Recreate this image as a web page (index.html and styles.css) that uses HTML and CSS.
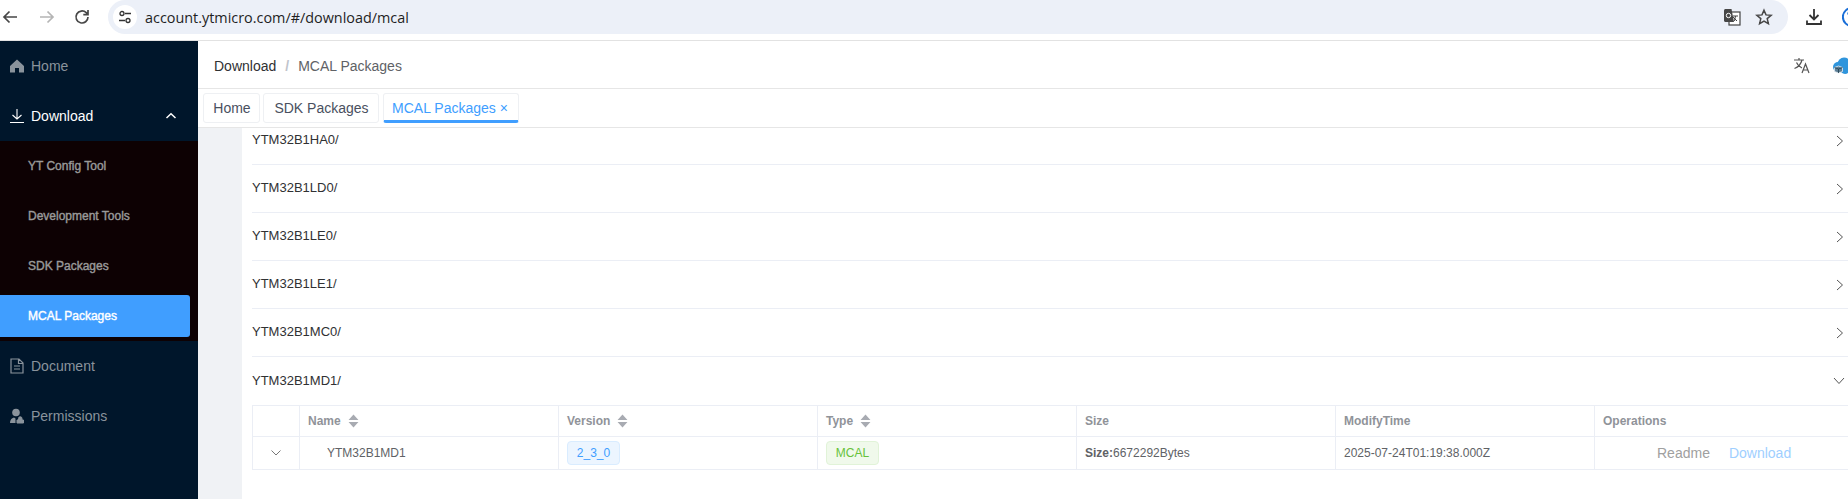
FILE: index.html
```html
<!DOCTYPE html>
<html lang="en">
<head>
<meta charset="utf-8">
<title>MCAL Packages</title>
<link rel="stylesheet" href="styles.css">
</head>
<body>
<div class="chrome">
  <svg class="cicon" width="20" height="20" viewBox="0 0 20 20"><path d="M17 10H4M9.500 4.500 4 10l5.500 5.500" fill="none" stroke="#474747" stroke-width="1.700"/></svg>
  <svg class="cicon fwd" width="20" height="20" viewBox="0 0 20 20"><path d="M3 10h13M10.500 4.500 16 10l-5.500 5.500" fill="none" stroke="#b5b5b5" stroke-width="1.700"/></svg>
  <svg class="cicon reload" width="20" height="20" viewBox="0 0 20 20"><path d="M16 10a6 6 0 1 1-1.800-4.300L16 7.500M16 3v4.700h-4.700" fill="none" stroke="#474747" stroke-width="1.700"/></svg>
  <div class="omnibox">
    <span class="tune"><svg width="16" height="16" viewBox="0 0 16 16"><circle cx="5" cy="4.500" r="2" fill="none" stroke="#333" stroke-width="1.300"/><path d="M8 4.500h6M2 11.500h6" stroke="#333" stroke-width="1.300"/><circle cx="11" cy="11.500" r="2" fill="none" stroke="#333" stroke-width="1.300"/></svg></span>
    <span class="url">account.ytmicro.com/#/download/mcal</span>
    <span class="spacer"></span>
    <svg class="gt" width="18" height="18" viewBox="0 0 18 18"><rect x="6" y="4" width="11" height="13" fill="#fff" stroke="#444" stroke-width="1.200"/><path d="M10 8h5M12.500 8l-1 5M10 9l4 4" stroke="#444" stroke-width="1" fill="none"/><path d="M1 2.500C1 1.700 1.700 1 2.500 1h6L11 14H2.500C1.700 14 1 13.300 1 12.500z" fill="#474747"/><circle cx="5.500" cy="7.500" r="2.200" fill="none" stroke="#fff" stroke-width="1"/></svg>
    <svg class="star" width="18" height="18" viewBox="0 0 18 18"><path d="M9 2.200l2 4.700 5.100.4-3.900 3.300 1.200 5L9 13l-4.400 2.600 1.200-5L1.900 7.300 7 6.900z" fill="none" stroke="#474747" stroke-width="1.500"/></svg>
  </div>
  <svg class="dl" width="20" height="20" viewBox="0 0 20 20"><path d="M10 2v10M5.500 8 10 12.500 14.500 8M3 13.500V17h14v-3.500" fill="none" stroke="#333" stroke-width="1.800"/></svg>
  <svg class="avatar" width="20" height="20" viewBox="0 0 20 20"><path d="M17 4.500A9 9 0 1 0 17 15.500" fill="none" stroke="#1a6fd8" stroke-width="2"/><path d="M6 7.500a3 3 0 0 1 6 0v2" fill="none" stroke="#1a6fd8" stroke-width="1.600"/></svg>
</div>
<div class="app">
  <aside class="side">
    <div class="mi"><svg class="mic" width="16" height="16" viewBox="0 0 16 16"><path d="M8 1.500 1 8v6.500h5V10h4v4.500h5V8z" fill="#8a939c"/></svg>Home</div>
    <div class="mi open"><svg class="mic" width="16" height="16" viewBox="0 0 16 16"><path d="M8 1v9.500M3.500 7 8 11l4.500-4M1 14.500h14" fill="none" stroke="#fff" stroke-width="1.100"/></svg>Download<svg class="caret" width="12" height="8" viewBox="0 0 12 8"><path d="M1.500 6 6 1.800 10.500 6" fill="none" stroke="#fff" stroke-width="1.500"/></svg></div>
    <div class="sub">
      <div class="si">YT Config Tool</div>
      <div class="si">Development Tools</div>
      <div class="si">SDK Packages</div>
      <div class="si on"><span class="pill">MCAL Packages</span></div>
    </div>
    <div class="mi"><svg class="mic" width="16" height="16" viewBox="0 0 16 16"><path d="M2 1h8l4 4v10H2zM9.500 1v4.500H14M5 8h6M5 11h6" fill="none" stroke="#8a939c" stroke-width="1.200"/></svg>Document</div>
    <div class="mi"><svg class="mic" width="16" height="16" viewBox="0 0 16 16"><circle cx="7" cy="4.500" r="3.800" fill="#8a939c"/><path d="M1 15c0-3 1.500-5 4-5.500l1.500 1V15z" fill="#8a939c"/><path d="M8 15v-3h6.500v3zM9.500 12v-1.500a1.700 1.700 0 0 1 3.500 0V12" fill="#8a939c" stroke="#8a939c"/></svg>Permissions</div>
  </aside>
  <main class="main">
    <header class="head">
      <span class="crumb">Download</span><span class="sep">/</span><span class="crumb2">MCAL Packages</span>
      <span class="spacer"></span>
      <svg class="lang" width="20" height="20" viewBox="0 0 20 20"><path d="M2 4h10M7 2v2M10 4c-1 4-3.500 7-7.500 8.500M4.500 6.500c1 2.500 3 4.500 5.500 5.500M10 17l3.500-9 3.500 9M11.300 14h4.400" fill="none" stroke="#555" stroke-width="1.200"/></svg>
      <svg class="cloud" width="18" height="18" viewBox="0 0 18 18"><circle cx="11" cy="7" r="6.500" fill="#2f95dc"/><circle cx="5" cy="10" r="5" fill="#2f95dc"/><circle cx="12" cy="12" r="5" fill="#2f95dc"/><path d="M1.500 10.500 5.500 9l4 1.500v4l-4 1.500-4-1.500z" fill="#5d7f96" stroke="#e8eef4" stroke-width=".8"/><path d="M1.500 10.500l4 1.500 4-1.500M5.500 12v4" fill="none" stroke="#24404f" stroke-width=".8"/></svg>
    </header>
    <nav class="tabs">
      <span class="tab t1">Home</span>
      <span class="tab t2">SDK Packages</span>
      <span class="tab act">MCAL Packages ×</span>
    </nav>
    <section class="body">
      <div class="panel">
        <div class="row cut"><span>YTM32B1HA0/</span><svg class="chev" width="10" height="14" viewBox="0 0 10 14"><path d="M2 2l5.500 5L2 12" fill="none" stroke="#555" stroke-width="1"/></svg></div>
        <div class="row"><span>YTM32B1LD0/</span><svg class="chev" width="10" height="14" viewBox="0 0 10 14"><path d="M2 2l5.500 5L2 12" fill="none" stroke="#555" stroke-width="1"/></svg></div>
        <div class="row"><span>YTM32B1LE0/</span><svg class="chev" width="10" height="14" viewBox="0 0 10 14"><path d="M2 2l5.500 5L2 12" fill="none" stroke="#555" stroke-width="1"/></svg></div>
        <div class="row"><span>YTM32B1LE1/</span><svg class="chev" width="10" height="14" viewBox="0 0 10 14"><path d="M2 2l5.500 5L2 12" fill="none" stroke="#555" stroke-width="1"/></svg></div>
        <div class="row"><span>YTM32B1MC0/</span><svg class="chev" width="10" height="14" viewBox="0 0 10 14"><path d="M2 2l5.500 5L2 12" fill="none" stroke="#555" stroke-width="1"/></svg></div>
        <div class="row last"><span>YTM32B1MD1/</span><svg class="chev" width="14" height="10" viewBox="0 0 14 10"><path d="M2 2l5 5.500L12 2" fill="none" stroke="#555" stroke-width="1"/></svg></div>
        <div class="tbl">
          <div class="tr th">
            <div class="c c0"></div>
            <div class="c">Name<svg class="sort" width="11" height="16" viewBox="0 0 10 14"><path d="M5 1 9.500 6h-9zM5 13 .5 8h9z" fill="#a8abb2"/></svg></div>
            <div class="c">Version<svg class="sort" width="11" height="16" viewBox="0 0 10 14"><path d="M5 1 9.500 6h-9zM5 13 .5 8h9z" fill="#a8abb2"/></svg></div>
            <div class="c">Type<svg class="sort" width="11" height="16" viewBox="0 0 10 14"><path d="M5 1 9.500 6h-9zM5 13 .5 8h9z" fill="#a8abb2"/></svg></div>
            <div class="c">Size</div>
            <div class="c">ModifyTime</div>
            <div class="c">Operations</div>
          </div>
          <div class="tr td">
            <div class="c c0"><svg width="12" height="8" viewBox="0 0 12 8"><path d="M1.500 1.500 6 6l4.500-4.500" fill="none" stroke="#777" stroke-width="1"/></svg></div>
            <div class="c name">YTM32B1MD1</div>
            <div class="c"><span class="tag blue">2_3_0</span></div>
            <div class="c"><span class="tag green">MCAL</span></div>
            <div class="c"><b class="lb">Size:</b>6672292Bytes</div>
            <div class="c">2025-07-24T01:19:38.000Z</div>
            <div class="c ops"><span class="rd">Readme</span><span class="dn">Download</span></div>
          </div>
        </div>
      </div>
    </section>
  </main>
</div>
</body>
</html>
```
FILE: styles.css
```css
* { box-sizing: border-box; }
html, body { margin: 0; height: 100%; overflow: hidden; background: #fff; }
body { width: 1848px; height: 499px; font-family: "Liberation Sans", Arial, sans-serif; color: #303133; }
.spacer { flex: 1; }
.chrome { height: 41px; display: flex; align-items: center; border-bottom: 1px solid #e2e2e2; background: #fff; padding-bottom: 6px; }
.cicon { flex: none; }
.fwd { margin-left: 17px; }
.reload { margin-left: 15px; }
.omnibox { margin-left: 16px; width: 1680px; flex: none; height: 34px; background: #ecf0f8; border-radius: 17px; display: flex; align-items: center; padding: 0 15px 0 5px; }
.tune { width: 24px; height: 24px; background: #fff; border-radius: 50%; display: flex; align-items: center; justify-content: center; flex: none; }
.url { margin-left: 8px; font: 14.400px "Open Sans", sans-serif; color: #1f1f1f; }
.star { margin-left: 14px; }
.dl { margin-left: 16px; flex: none; }
.avatar { margin-left: 18px; flex: none; }
.app { display: flex; height: 458px; }
.side { width: 198px; flex: none; background: #00162b; color: #8a939c; font-size: 14px; }
.mi { height: 50px; display: flex; align-items: center; padding-left: 9px; }
.mic { margin-right: 6px; flex: none; }
.open { color: #fff; }
.caret { margin-left: auto; margin-right: 21px; }
.sub { background: #0d0103; }
.si { height: 50px; display: flex; align-items: center; padding-left: 28px; font-size: 12px; -webkit-text-stroke: .4px currentColor; color: #9a9a9a; }
.si.on { padding-left: 0; padding-right: 8px; color: #fff; }
.pill { flex: 1; height: 42px; background: #409eff; border-radius: 0 3px 3px 0; display: flex; align-items: center; padding-left: 28px; }
.main { flex: 1; min-width: 0; display: flex; flex-direction: column; }
.head { height: 48px; flex: none; display: flex; align-items: center; padding: 2px 0 0 16px; font-size: 14px; border-bottom: 1px solid #e6e6e6; }
.crumb { color: #303133; }
.sep { margin: 0 9px; color: #c0c4cc; font-weight: 700; }
.crumb2 { color: #606266; }
.lang { flex: none; margin-right: 21px; }
.cloud { flex: none; margin-right: -3px; }
.tabs { height: 39px; flex: none; display: flex; padding: 4px 0 0 5px; gap: 3px; border-bottom: 1px solid #e6e6e6; font-size: 14px; }
.tab { height: 30px; display: flex; align-items: center; justify-content: center; border: 1px solid #eef0f3; border-radius: 3px; color: #495060; }
.t1 { width: 57px; padding-left: 1px; }
.t2 { width: 116px; margin-right: 1px; padding-left: 1px; }
.act { width: 136px; color: #409eff; border-bottom: 3px solid #409eff; padding: 2px 2px 0 0; }
.body { flex: 1; background: #f0f2f5; padding-left: 44px; overflow: hidden; }
.panel { background: #fff; height: 100%; padding-left: 10px; }
.row { height: 48px; display: flex; align-items: center; justify-content: space-between; padding: 0 3px 2px 0; font-size: 13px; color: #303133; border-bottom: 1px solid #ebeef5; }
.cut { height: 37px; padding-bottom: 13px; }
.last { border-bottom: 0; height: 48px; padding-right: 2px; }
.chev { flex: none; margin-top: 2px; }
.tbl { width: 1601px; border-left: 1px solid #ebeef5; border-top: 1px solid #ebeef5; font-size: 12px; }
.tr { display: grid; grid-template-columns: 47px repeat(6, 259px); border-bottom: 1px solid #ebeef5; }
.th { height: 31px; font-weight: 700; color: #909399; }
.td { height: 33px; color: #606266; }
.c { display: flex; align-items: center; padding-left: 8px; border-right: 1px solid #ebeef5; }
.c0 { justify-content: center; padding-left: 0; }
.sort { margin-left: 7px; }
.name { padding-left: 27px; }
.tag { display: inline-flex; align-items: center; justify-content: center; width: 53px; height: 24px; border-radius: 4px; border: 1px solid; }
.blue { background: #ecf5ff; border-color: #d9ecff; color: #409eff; }
.green { background: #f0f9eb; border-color: #e1f3d8; color: #67c23a; }
.lb { color: #606266; }
.ops { font-size: 14px; padding-left: 62px; }
.rd { color: #a0a0a0; }
.dn { margin-left: 19px; color: #a0cfff; }
```
